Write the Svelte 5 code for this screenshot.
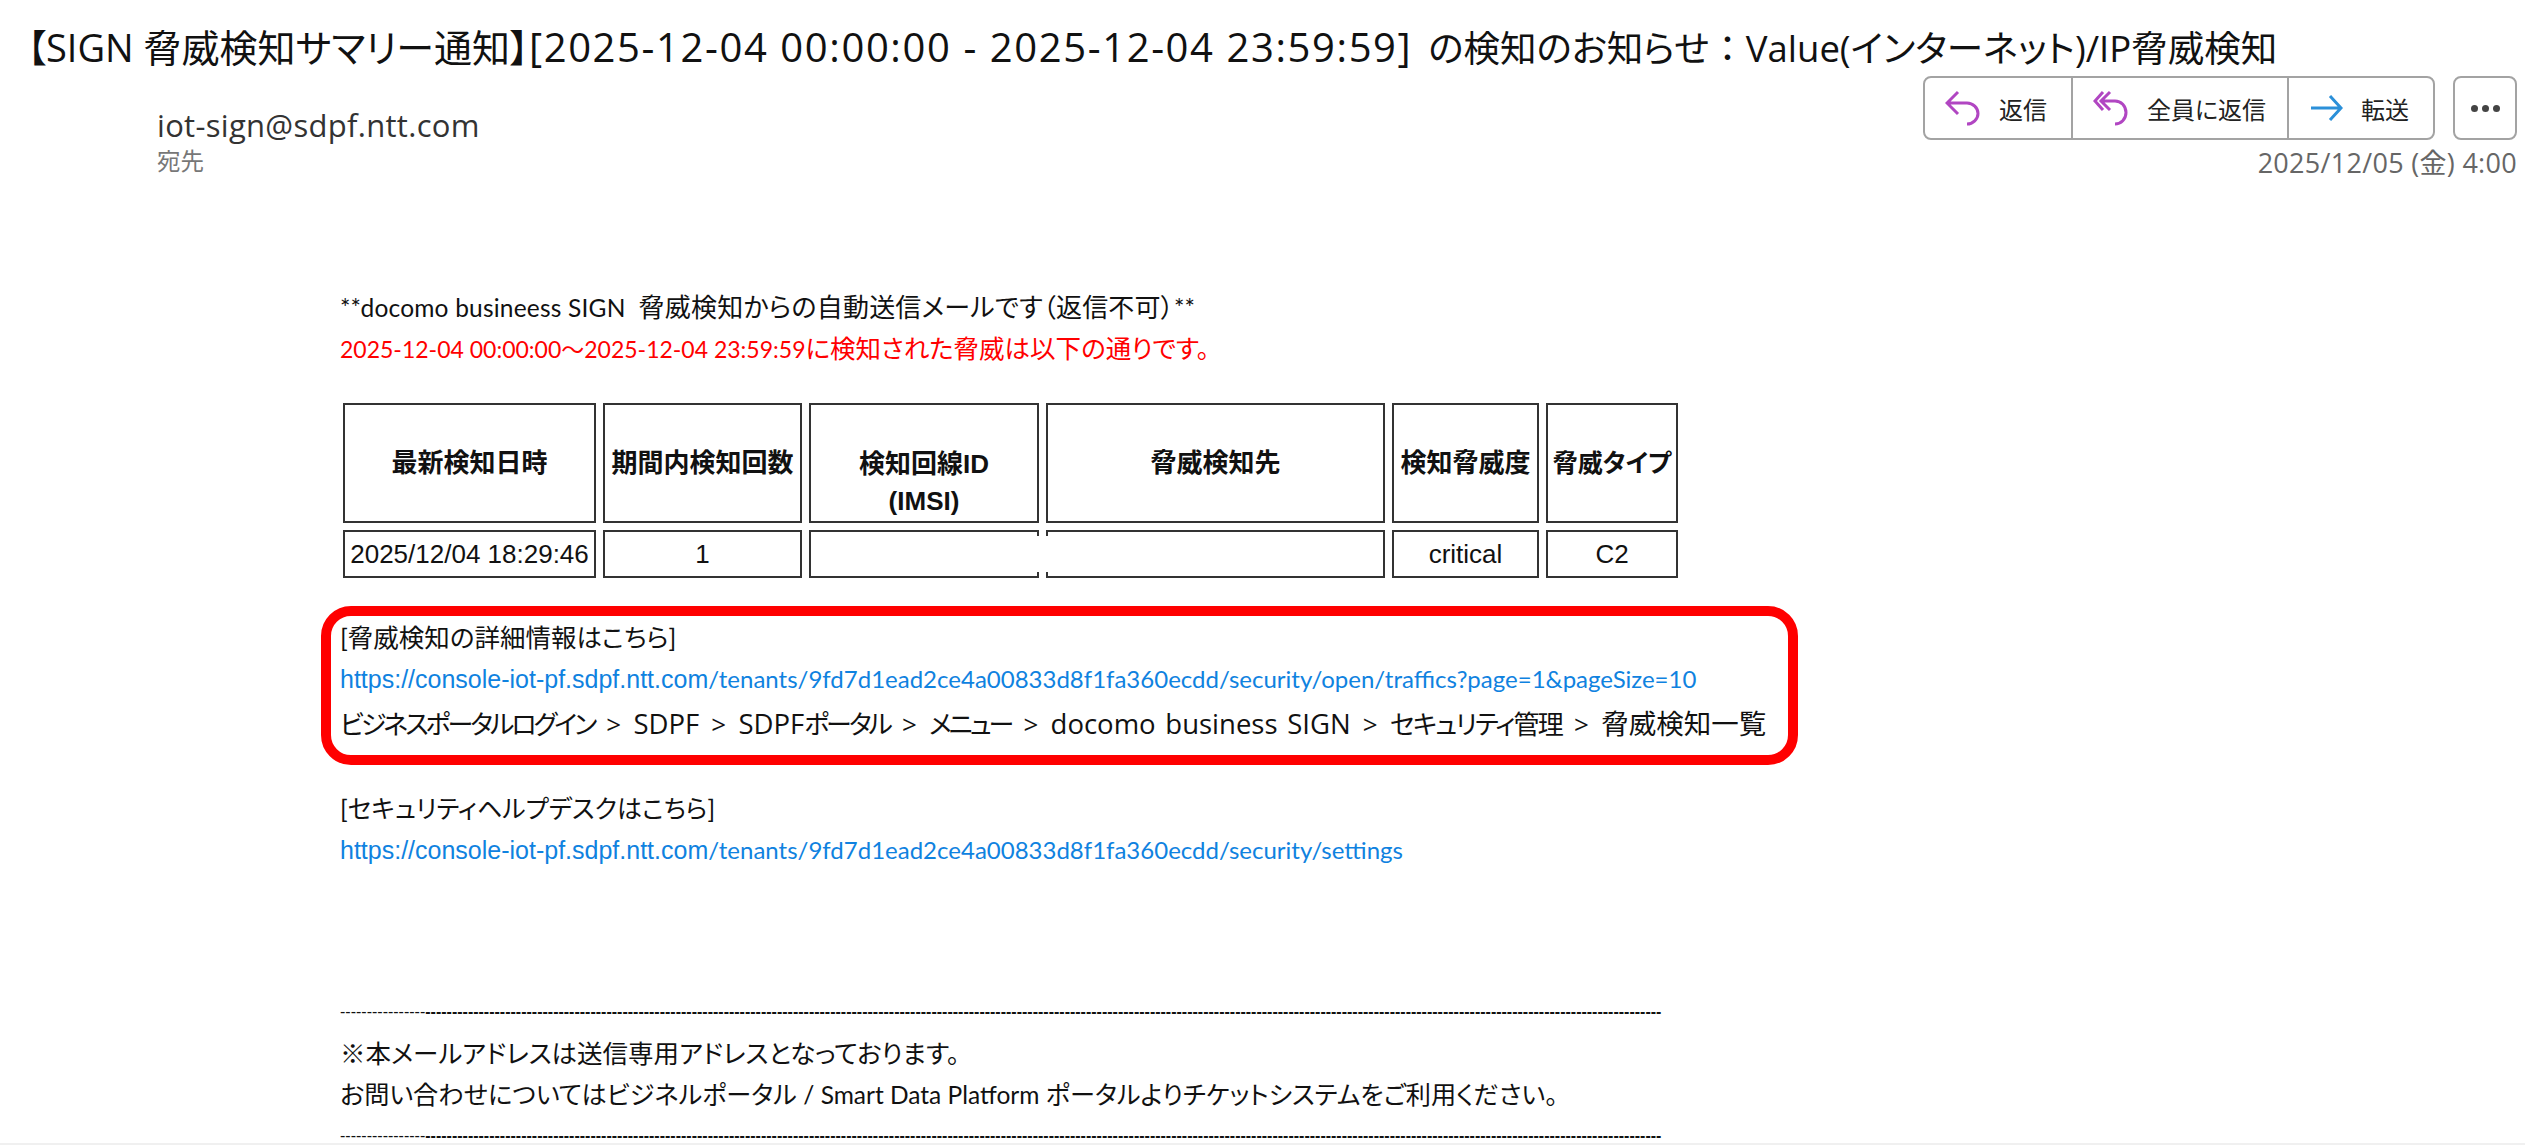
<script>
  const headers = ["最新検知日時", "期間内検知回数", "検知回線ID", "脅威検知先", "検知脅威度", "脅威タイプ"];
  const tenant = "9fd7d1ead2ce4a00833d8f1fa360ecdd";
  const thin = "-".repeat(16);
  const rule = "-".repeat(232);
</script>

<div class="page">
  <h1 class="subject">【SIGN 脅威検知サマリー通知】<span class="range">[2025-12-04 00:00:00 - 2025-12-04 23:59:59]</span><span class="rest">の検知のお知らせ<span class="fw">：</span>Value(インターネット)/IP脅威検知</span></h1>

  <div class="meta">
    <div class="sender">
      <div class="from">iot-sign@sdpf.ntt.com</div>
      <div class="to">宛先</div>
    </div>
    <div class="side">
      <div class="actions">
        <div class="group">
          <button>
            <svg width="36" height="40" viewBox="0 0 36 40"><path d="M13 4 2 15l11 11M2 15h20c6 0 11 5 11 10.5S28 36 22 36" /></svg>
            返信
          </button>
          <button class="wide">
            <svg width="36" height="40" viewBox="0 0 36 40"><path d="M10 4 2 13l8 9M17 4l-9 9 9 9M8 13h14c6 0 11 5 11 11.5S28 36 22 36" /></svg>
            全員に返信
          </button>
          <button class="fwd">
            <svg width="34" height="40" viewBox="0 0 34 40"><path d="M2 20h30M21 8l11 12-11 12" /></svg>
            転送
          </button>
        </div>
        <button class="more" aria-label="more"><i></i><i></i><i></i></button>
      </div>
      <div class="date">2025/12/05 (金) 4:00</div>
    </div>
  </div>

  <div class="body">
    <p class="intro"><span class="en">**docomo busineess SIGN &nbsp;</span>脅威検知からの自動送信メールです（返信不可）<span class="en">**</span></p>
    <p class="alert"><span class="num">2025-12-04 00:00:00～2025-12-04 23:59:59</span>に検知された脅威は以下の通りです。</p>

    <table>
      <thead>
        <tr>
          {#each headers as h, i}
            <th class="c{i}">{h}{#if i === 2}<br />(IMSI){/if}</th>
          {/each}
        </tr>
      </thead>
      <tbody>
        <tr>
          <td>2025/12/04 18:29:46</td>
          <td>1</td>
          <td class="masked"><span class="mask"></span></td>
          <td></td>
          <td>critical</td>
          <td>C2</td>
        </tr>
      </tbody>
    </table>

    <section class="detail">
      <div class="highlight"></div>
      <p>[脅威検知の詳細情報はこちら]</p>
      <p class="link"><b>https://console-iot-pf.sdpf.ntt.com</b>/tenants/{tenant}/security/open/traffics?page=1&amp;pageSize=10</p>
      <p class="path"><span class="k">ビジネスポータルログイン</span> &gt; <span class="l">SDPF</span> &gt; <span class="l">SDPF</span><span class="k">ポータル</span> &gt; <span class="k">メニュー</span> &gt; <span class="l">docomo business SIGN</span> &gt; <span class="k wide-k">セキュリティ管理</span> &gt; <span class="c">脅威検知一覧</span></p>
    </section>

    <section class="help">
      <p>[セキュリティヘルプデスクはこちら]</p>
      <p class="link"><b>https://console-iot-pf.sdpf.ntt.com</b>/tenants/{tenant}/security/settings</p>
    </section>

    <section class="foot">
      <p class="rule top"><span>{thin}</span>{rule}</p>
      <p>※本メールアドレスは送信専用アドレスとなっております。</p>
      <p class="ask">お問い合わせについてはビジネルポータル <span class="en">/ Smart Data Platform</span> ポータルよりチケットシステムをご利用ください。</p>
      <p class="rule bottom"><span>{thin}</span>{rule}</p>
    </section>
  </div>
  <div class="strip"></div>
</div>

<style>
  :global(body) {
    margin: 0;
    background: #fff;
    font-family: "Open Sans", "Noto Sans CJK JP", sans-serif;
    font-feature-settings: "palt";
    color: #111;
  }
  .page {
    position: relative;
    height: 1145px;
    overflow: hidden;
  }
  .subject {
    margin: 0;
    padding: 20px 0 0 27px;
    font-size: 38px;
    font-weight: 400;
    line-height: 54px;
    height: 54px;
    white-space: nowrap;
    color: #111;
  }
  .range {
    font-size: 40px;
    letter-spacing: 1.6px;
  }
  .rest {
    margin-left: 16px;
    font-size: 36.5px;
  }
  .fw {
    font-feature-settings: normal;
  }
  .meta {
    display: flex;
    justify-content: space-between;
    padding: 2px 8px 0 157px;
  }
  .sender {
    padding-top: 30px;
  }
  .from {
    font-size: 31px;
    line-height: 38px;
    letter-spacing: 0.3px;
    color: #333;
  }
  .to {
    font-size: 23.5px;
    line-height: 34px;
    color: #777;
  }
  .side {
    display: flex;
    flex-direction: column;
    align-items: flex-end;
  }
  .actions {
    display: flex;
    gap: 18px;
  }
  .group {
    display: flex;
    height: 64px;
    box-sizing: border-box;
    border: 2px solid #a3a3a3;
    border-radius: 8px;
  }
  button {
    display: flex;
    align-items: center;
    gap: 18px;
    box-sizing: border-box;
    width: 148px;
    height: 100%;
    padding: 0 0 0 20px;
    background: none;
    border: 0;
    border-right: 2px solid #a3a3a3;
    font: inherit;
    font-size: 24px;
    color: #222;
  }
  button.wide {
    width: 216px;
  }
  button.fwd {
    width: 144px;
    border-right: 0;
  }
  svg {
    fill: none;
    stroke: #b146c2;
    stroke-width: 3;
    flex: none;
  }
  .fwd svg {
    stroke: #2b90d9;
  }
  .more {
    width: 64px;
    height: 64px;
    padding: 0;
    justify-content: center;
    gap: 4px;
    border: 2px solid #a3a3a3;
    border-radius: 8px;
  }
  .more i {
    width: 7px;
    height: 7px;
    border-radius: 50%;
    background: #444;
  }
  .date {
    margin-top: 7px;
    font-size: 27px;
    line-height: 32px;
    letter-spacing: 0.3px;
    color: #666;
  }
  .body {
    padding: 0 0 0 340px;
    margin-top: 108px;
  }
  p {
    margin: 0;
    font-size: 25.5px;
    line-height: 41px;
    white-space: nowrap;
    font-family: Lato, "Noto Sans CJK JP", sans-serif;
  }
  .en {
    font-size: 24.5px;
  }
  .num {
    font-size: 23px;
  }
  .intro {
    font-size: 26px;
    letter-spacing: 0.2px;
  }
  .alert {
    color: #f00;
  }
  table {
    margin: 26px 0 0 -4px;
    border-collapse: separate;
    border-spacing: 7px;
    table-layout: fixed;
    width: 1347px;
    font-family: "Liberation Sans", "Noto Sans CJK JP", sans-serif;
    font-size: 26px;
  }
  th, td {
    box-sizing: border-box;
    border: 2px solid #333;
    text-align: center;
    padding: 0;
  }
  th {
    height: 120px;
    font-weight: 700;
    line-height: 37px;
  }
  td {
    height: 48px;
    font-weight: 400;
  }
  th.c2 {
    padding-top: 40px;
  }
  .c0 { width: 253px; }
  .c1 { width: 199px; }
  .c2 { width: 230px; }
  .c3 { width: 339px; }
  .c4 { width: 147px; }
  .c5 { width: 132px; font-size: 25px; }
  .masked {
    position: relative;
  }
  .mask {
    position: absolute;
    right: -11px;
    top: 4px;
    bottom: 4px;
    width: 16px;
    background: #fff;
  }
  .detail {
    position: relative;
    margin-top: 32px;
  }
  .highlight {
    position: absolute;
    left: -19px;
    top: -11px;
    width: 1477px;
    height: 159px;
    box-sizing: border-box;
    border: 10px solid #f00;
    border-radius: 30px;
    pointer-events: none;
  }
  .link {
    color: #0f82e0;
    font-size: 24px;
  }
  .link b {
    font-weight: 400;
    font-size: 25px;
    font-family: "Liberation Sans", sans-serif;
  }
  .path {
    padding-top: 3px;
    font-size: 26px;
    font-family: "Open Sans", "Noto Sans CJK JP", sans-serif;
    word-spacing: 5.4px;
  }
  .path .l {
    font-size: 27.5px;
    word-spacing: 2.5px;
  }
  .path .k {
    letter-spacing: -3px;
  }
  .path .wide-k {
    letter-spacing: -1.8px;
  }
  .path .c {
    font-size: 27.5px;
  }
  .help {
    margin-top: 43px;
  }
  .help p:first-child {
    font-size: 25px;
  }
  .foot {
    margin-top: 132px;
  }
  .ask {
    font-size: 25.2px;
  }
  .rule {
    font-family: "Liberation Sans", sans-serif;
    font-weight: 700;
    line-height: 18px;
    font-size: 16px;
    color: #111;
  }
  .rule.top {
    margin-bottom: 12px;
  }
  .rule.bottom {
    margin-top: 12px;
  }
  .rule span {
    font-weight: 400;
  }
  .strip {
    position: absolute;
    left: 0;
    right: 0;
    bottom: 0;
    height: 2px;
    background: #f0f0f0;
  }
</style>
